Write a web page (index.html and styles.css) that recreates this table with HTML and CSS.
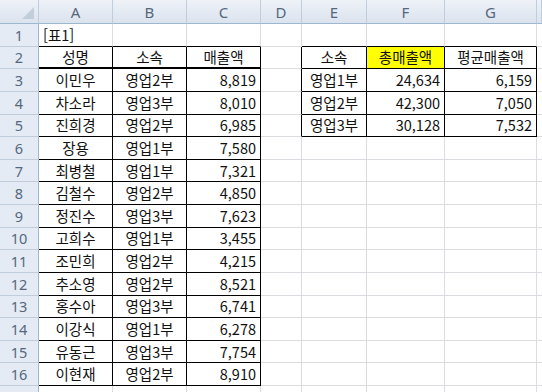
FILE: index.html
```html
<!DOCTYPE html>
<html lang="ko">
<head>
<meta charset="utf-8">
<link rel="stylesheet" href="styles.css">
</head>
<body>
<div class="sheet">
  <div class="h corner"><svg class="tri" width="14" height="14" viewBox="0 0 14 14"><polygon points="13,1 13,13 1,13" fill="#c3cedb"/></svg></div>
  <div class="h">A</div><div class="h">B</div><div class="h">C</div><div class="h">D</div><div class="h">E</div><div class="h">F</div><div class="h">G</div><div class="h"></div>

  <div class="r">1</div><div class="c bb">[표1]</div><div class="c bb"></div><div class="c bb"></div><div class="c"></div><div class="c bb"></div><div class="c bb"></div><div class="c bb"></div><div class="c"></div>

  <div class="r">2</div><div class="c t ctr hb">성명</div><div class="c t ctr hb">소속</div><div class="c t ctr hb">매출액</div><div class="c br"></div><div class="c t ctr">소속</div><div class="c t ctr yellow">총매출액</div><div class="c t ctr">평균매출액</div><div class="c"></div>

  <div class="r">3</div><div class="c t ctr">이민우</div><div class="c t ctr">영업2부</div><div class="c t num">8,819</div><div class="c br"></div><div class="c t ctr">영업1부</div><div class="c t num">24,634</div><div class="c t num">6,159</div><div class="c"></div>

  <div class="r">4</div><div class="c t ctr">차소라</div><div class="c t ctr">영업3부</div><div class="c t num">8,010</div><div class="c br"></div><div class="c t ctr">영업2부</div><div class="c t num">42,300</div><div class="c t num">7,050</div><div class="c"></div>

  <div class="r">5</div><div class="c t ctr">진희경</div><div class="c t ctr">영업2부</div><div class="c t num">6,985</div><div class="c br"></div><div class="c t ctr">영업3부</div><div class="c t num">30,128</div><div class="c t num">7,532</div><div class="c"></div>

  <div class="r">6</div><div class="c t ctr">장용</div><div class="c t ctr">영업1부</div><div class="c t num">7,580</div><div class="c"></div><div class="c"></div><div class="c"></div><div class="c"></div><div class="c"></div>

  <div class="r">7</div><div class="c t ctr">최병철</div><div class="c t ctr">영업1부</div><div class="c t num">7,321</div><div class="c"></div><div class="c"></div><div class="c"></div><div class="c"></div><div class="c"></div>

  <div class="r">8</div><div class="c t ctr">김철수</div><div class="c t ctr">영업2부</div><div class="c t num">4,850</div><div class="c"></div><div class="c"></div><div class="c"></div><div class="c"></div><div class="c"></div>

  <div class="r">9</div><div class="c t ctr">정진수</div><div class="c t ctr">영업3부</div><div class="c t num">7,623</div><div class="c"></div><div class="c"></div><div class="c"></div><div class="c"></div><div class="c"></div>

  <div class="r">10</div><div class="c t ctr">고희수</div><div class="c t ctr">영업1부</div><div class="c t num">3,455</div><div class="c"></div><div class="c"></div><div class="c"></div><div class="c"></div><div class="c"></div>

  <div class="r">11</div><div class="c t ctr">조민희</div><div class="c t ctr">영업2부</div><div class="c t num">4,215</div><div class="c"></div><div class="c"></div><div class="c"></div><div class="c"></div><div class="c"></div>

  <div class="r">12</div><div class="c t ctr">추소영</div><div class="c t ctr">영업2부</div><div class="c t num">8,521</div><div class="c"></div><div class="c"></div><div class="c"></div><div class="c"></div><div class="c"></div>

  <div class="r">13</div><div class="c t ctr">홍수아</div><div class="c t ctr">영업3부</div><div class="c t num">6,741</div><div class="c"></div><div class="c"></div><div class="c"></div><div class="c"></div><div class="c"></div>

  <div class="r">14</div><div class="c t ctr">이강식</div><div class="c t ctr">영업1부</div><div class="c t num">6,278</div><div class="c"></div><div class="c"></div><div class="c"></div><div class="c"></div><div class="c"></div>

  <div class="r">15</div><div class="c t ctr">유동근</div><div class="c t ctr">영업3부</div><div class="c t num">7,754</div><div class="c"></div><div class="c"></div><div class="c"></div><div class="c"></div><div class="c"></div>

  <div class="r">16</div><div class="c t ctr">이현재</div><div class="c t ctr">영업2부</div><div class="c t num">8,910</div><div class="c"></div><div class="c"></div><div class="c"></div><div class="c"></div><div class="c"></div>

  <div class="r"></div><div class="c"></div><div class="c"></div><div class="c"></div><div class="c"></div><div class="c"></div><div class="c"></div><div class="c"></div><div class="c"></div>
</div>
</body>
</html>
```
FILE: styles.css
```css
* { box-sizing: border-box; }
html, body { margin: 0; padding: 0; background: #ffffff; overflow: hidden; }
body { width: 542px; height: 392px; }

.sheet {
  display: grid;
  grid-template-columns: 39px 74px 74px 74px 41px 65px 78px 92px 5px;
  grid-template-rows: 24px repeat(16, 22.625px) 12px;
  font-family: "Noto Sans CJK KR", "Noto Sans", sans-serif;
  font-size: 14.5px;
  color: #111;
}

.h, .r {
  background: linear-gradient(#eef2f8, #dbe3ee);
  color: #56677c;
  display: flex;
  align-items: center;
  justify-content: center;
  font-family: "Noto Sans", "Noto Sans CJK KR", sans-serif;
  font-size: 15px;
  border-right: 1px solid #c0cddc;
  border-bottom: 1px solid #9eb6ce;
}
.r {
  background: #e4ebf4;
  border-right: 1px solid #9eb6ce;
  border-bottom: 1px solid #c0cddc;
  font-size: 14.5px;
}
.corner { position: relative; }
.tri { position: absolute; right: 3px; bottom: 3px; }

.c {
  display: flex;
  align-items: center;
  padding: 0 4px 1px;
  border-right: 1px solid #dadcdf;
  border-bottom: 1px solid #dadcdf;
  white-space: nowrap;
  overflow: hidden;
}
.t { border-right-color: #000; border-bottom-color: #000; }
.bb { border-bottom-color: #000; }
.br { border-right-color: #000; }
.hb { border-bottom: 2px solid #000; }
.ctr { justify-content: center; }
.num { justify-content: flex-end; }
.yellow { background: #ffff00; }
```
